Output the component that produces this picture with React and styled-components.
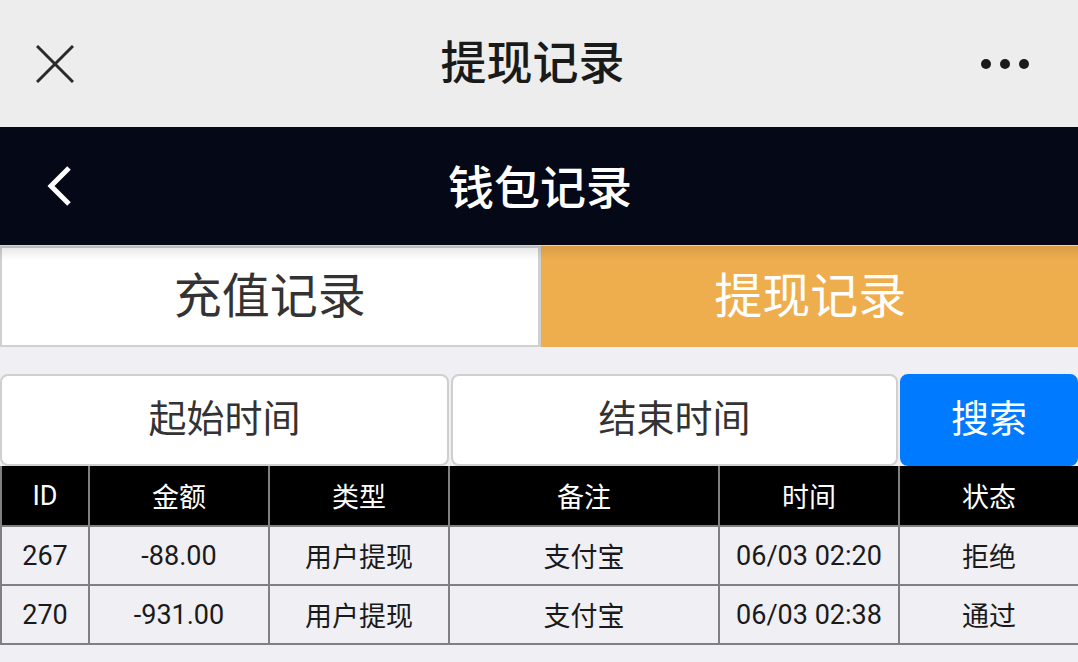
import React from 'react';
import styled, { createGlobalStyle } from 'styled-components';

const Global = createGlobalStyle`
  html, body {
    margin: 0;
    padding: 0;
    background: #efeff4;
    font-family: Roboto, "Noto Sans CJK SC", sans-serif;
  }
  * { box-sizing: border-box; }
`;

const Page = styled.div`
  width: 1078px;
  min-height: 662px;
  background: #efeff4;
`;

const TopBar = styled.div`
  height: 127px;
  background: #ededed;
  display: flex;
  align-items: center;
  justify-content: space-between;
  padding: 0 49px 0 36px;
`;

const TopTitle = styled.h1`
  margin: 0 0 10px 0;
  font-size: 46px;
  font-weight: 500;
  color: #1a1a1a;
`;

const IconBtn = styled.div`
  width: 48px;
  display: flex;
  align-items: center;
  justify-content: ${p => (p.right ? 'flex-end' : 'flex-start')};
`;

const NavBar = styled.div`
  height: 118px;
  background: #050816;
  display: flex;
  align-items: center;
  justify-content: space-between;
  padding: 0 44px 0 46px;
`;

const NavTitle = styled.h2`
  margin: 0 0 4px 0;
  font-size: 46px;
  font-weight: 500;
  color: #fff;
`;

const Tabs = styled.div`
  position: relative;
  display: flex;
  height: 102px;
  border-top: 1px solid #d6d6d6;
  &::before {
    content: '';
    position: absolute;
    left: 0;
    right: 0;
    top: 0;
    height: 14px;
    background: linear-gradient(rgba(0, 0, 0, 0.1), rgba(0, 0, 0, 0));
    pointer-events: none;
  }
`;

const Tab = styled.div`
  flex: 1;
  display: flex;
  align-items: center;
  justify-content: center;
  font-size: 48px;
  color: ${p => (p.active ? '#fff' : '#333')};
  background: ${p => (p.active ? '#efae4e' : '#fff')};
  border: 2px solid ${p => (p.active ? '#efae4e' : '#d0d0d0')};
  border-right: ${p => (p.active ? 'none' : '3px solid #d0d0d0')};
  padding-bottom: 9px;
`;

const SearchRow = styled.div`
  display: flex;
  gap: 2px;
  margin-top: 27px;
  height: 92px;
`;

const Field = styled.div`
  flex: 0 0 ${p => p.w}px;
  display: flex;
  align-items: center;
  justify-content: center;
  font-size: 38px;
  color: ${p => (p.primary ? '#fff' : '#333')};
  background: ${p => (p.primary ? '#007aff' : '#fff')};
  border: 2px solid ${p => (p.primary ? '#007aff' : '#cfcfcf')};
  border-radius: 8px;
  padding-bottom: 9px;
`;

const Table = styled.table`
  width: 1078px;
  border-collapse: collapse;
  table-layout: fixed;
  font-size: 27px;
  text-align: center;
`;

const Th = styled.th`
  height: 60px;
  background: #000;
  color: #fff;
  font-weight: 400;
  border: 2px solid #808080;
  border-top: none;
  padding: 0;
`;

const Td = styled.td`
  height: 59px;
  color: #1a1a1a;
  border: 2px solid #808080;
  padding: 0;
`;

const Close = () => (
  <svg width="38" height="38" viewBox="0 0 38 38">
    <path d="M1 1 L37 37 M37 1 L1 37" stroke="#2a2a2a" strokeWidth="3" fill="none" />
  </svg>
);

const Dots = () => (
  <svg width="48" height="12" viewBox="0 0 48 12">
    <circle cx="5" cy="6" r="5" fill="#1a1a1a" />
    <circle cx="24" cy="6" r="5" fill="#1a1a1a" />
    <circle cx="43" cy="6" r="5" fill="#1a1a1a" />
  </svg>
);

const Back = () => (
  <svg width="26" height="42" viewBox="0 0 26 42">
    <path d="M23 3 L5 21 L23 39" stroke="#fff" strokeWidth="5" fill="none" />
  </svg>
);

const cols = [88, 180, 180, 270, 180, 180];
const heads = ['ID', '金额', '类型', '备注', '时间', '状态'];
const rows = [
  ['267', '-88.00', '用户提现', '支付宝', '06/03 02:20', '拒绝'],
  ['270', '-931.00', '用户提现', '支付宝', '06/03 02:38', '通过'],
];

const App = () => {
  return (
    <Page>
      <Global />
      <TopBar>
        <IconBtn><Close /></IconBtn>
        <TopTitle>提现记录</TopTitle>
        <IconBtn right><Dots /></IconBtn>
      </TopBar>
      <NavBar>
        <IconBtn><Back /></IconBtn>
        <NavTitle>钱包记录</NavTitle>
        <IconBtn />
      </NavBar>
      <Tabs>
        <Tab>充值记录</Tab>
        <Tab active>提现记录</Tab>
      </Tabs>
      <SearchRow>
        <Field w={449}>起始时间</Field>
        <Field w={447}>结束时间</Field>
        <Field w={178} primary>搜索</Field>
      </SearchRow>
      <Table>
        <colgroup>
          {cols.map((w, i) => <col key={i} style={{ width: w }} />)}
        </colgroup>
        <thead>
          <tr>{heads.map(h => <Th key={h}>{h}</Th>)}</tr>
        </thead>
        <tbody>
          {rows.map(r => (
            <tr key={r[0]}>{r.map((c, i) => <Td key={i}>{c}</Td>)}</tr>
          ))}
        </tbody>
      </Table>
    </Page>
  );
};

export default App;
